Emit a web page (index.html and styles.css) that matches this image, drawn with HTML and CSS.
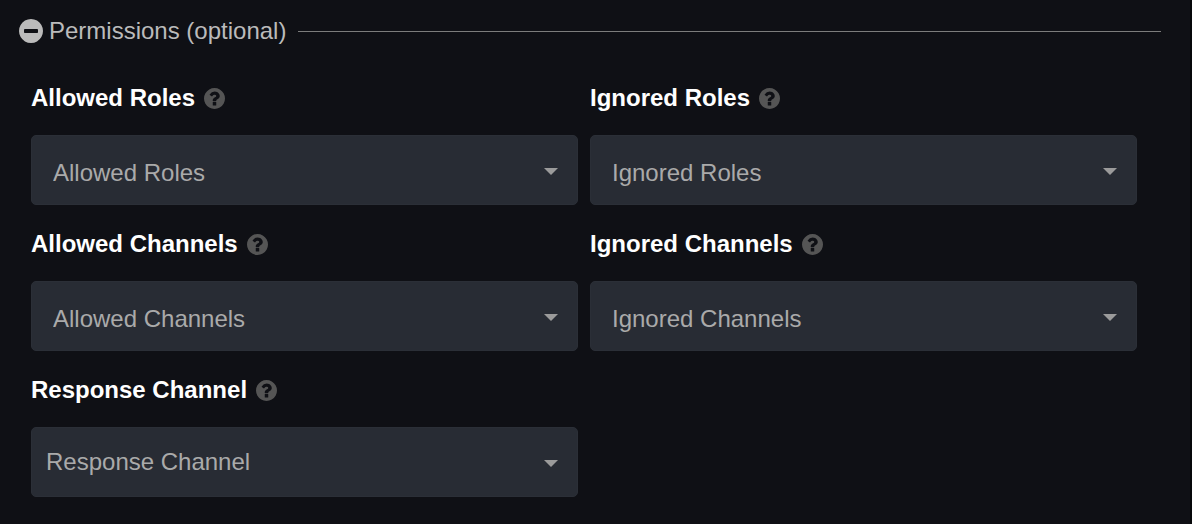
FILE: index.html
```html
<!DOCTYPE html>
<html lang="en">
<head>
  <meta charset="UTF-8">
  <meta name="viewport" content="width=device-width, initial-scale=1.0">
  <title>Permissions</title>
  <link rel="stylesheet" href="styles.css">
</head>
<body>
  <svg class="sprite" aria-hidden="true">
    <symbol id="icon-question" viewBox="0 0 1536 1536">
      <path d="M896 1248v-192q0-14-9-23t-23-9h-192q-14 0-23 9t-9 23v192q0 14 9 23t23 9h192q14 0 23-9t9-23zm256-672q0-88-55.500-163t-138.500-116-170-41q-243 0-371 213-15 24 8 42l132 100q7 6 19 6 16 0 25-12 53-68 86-92 34-24 86-24 48 0 85.500 26t37.500 59q0 38-20 61t-68 45q-63 28-115.500 86.500t-52.500 125.500v36q0 14 9 23t23 9h192q14 0 23-9t9-23q0-19 21.500-49.500t54.500-49.500q32-18 49-28.500t46-35 44.500-48 28-60.500 12.500-81zm384 192q0 209-103 385.500t-279.500 279.500-385.500 103-385.500-103-279.500-279.500-103-385.500 103-385.500 279.500-279.500 385.500-103 385.500 103 279.500 279.500 103 385.500z"/>
    </symbol>
    <symbol id="icon-caret" viewBox="0 0 14 7">
      <path d="M0 0h14L7 7z"/>
    </symbol>
  </svg>

  <section class="permissions">
    <button class="section-toggle" type="button" aria-expanded="true">
      <svg class="toggle-icon" viewBox="0 0 1536 1536" aria-hidden="true">
        <path d="M1216 832v-128q0-26-19-45t-45-19h-768q-26 0-45 19t-19 45v128q0 26 19 45t45 19h768q26 0 45-19t19-45zm320-64q0 209-103 385.500t-279.500 279.500-385.500 103-385.500-103-279.500-279.500-103-385.500 103-385.500 279.500-279.500 385.500-103 385.500 103 279.500 279.500 103 385.500z"/>
      </svg>
      <span>Permissions (optional)</span>
    </button>

    <form class="fields">
      <div class="field">
        <div class="field-title">
          <label for="allowed-roles">Allowed Roles</label>
          <svg class="help"><use href="#icon-question"/></svg>
        </div>
        <div class="select multi">
          <select id="allowed-roles"><option>Allowed Roles</option></select>
          <svg class="caret"><use href="#icon-caret"/></svg>
        </div>
      </div>

      <div class="field">
        <div class="field-title">
          <label for="ignored-roles">Ignored Roles</label>
          <svg class="help"><use href="#icon-question"/></svg>
        </div>
        <div class="select multi">
          <select id="ignored-roles"><option>Ignored Roles</option></select>
          <svg class="caret"><use href="#icon-caret"/></svg>
        </div>
      </div>

      <div class="field">
        <div class="field-title">
          <label for="allowed-channels">Allowed Channels</label>
          <svg class="help"><use href="#icon-question"/></svg>
        </div>
        <div class="select multi">
          <select id="allowed-channels"><option>Allowed Channels</option></select>
          <svg class="caret"><use href="#icon-caret"/></svg>
        </div>
      </div>

      <div class="field">
        <div class="field-title">
          <label for="ignored-channels">Ignored Channels</label>
          <svg class="help"><use href="#icon-question"/></svg>
        </div>
        <div class="select multi">
          <select id="ignored-channels"><option>Ignored Channels</option></select>
          <svg class="caret"><use href="#icon-caret"/></svg>
        </div>
      </div>

      <div class="field">
        <div class="field-title">
          <label for="response-channel">Response Channel</label>
          <svg class="help"><use href="#icon-question"/></svg>
        </div>
        <div class="select single">
          <select id="response-channel"><option>Response Channel</option></select>
          <svg class="caret"><use href="#icon-caret"/></svg>
        </div>
      </div>
    </form>
  </section>
</body>
</html>
```

FILE: styles.css
```css
* {
  box-sizing: border-box;
}

html {
  background-color: #0f1015;
}

body {
  border-right: 2px solid #07080a;
  color: #fff;
  font-family: "Liberation Sans", Arial, sans-serif;
  font-size: 24px;
  line-height: 28px;
  margin: 0;
}

.sprite {
  display: none;
}

.permissions {
  padding: 17px 29px 27px 19px;
}

.section-toggle {
  display: flex;
  align-items: center;
  gap: 6px;
  width: 100%;
  padding: 0;
  border: 0;
  background: none;
  color: #bbb;
  font: inherit;
  cursor: pointer;
}

/* line that fills the rest of the heading */
.section-toggle::after {
  content: "";
  flex: 1;
  height: 1px;
  margin-left: 6px;
  background-color: #7c7c7c;
}

.toggle-icon {
  width: 24px;
  height: 24px;
  fill: currentColor;
}

.fields {
  display: grid;
  grid-template-columns: 1fr 1fr;
  column-gap: 12px;
  row-gap: 25px;
  padding: 39px 24px 0 12px;
}

.field-title {
  display: flex;
  align-items: center;
  gap: 9px;
  margin-bottom: 23px;
}

.field-title label {
  font-weight: bold;
}

.help {
  width: 21px;
  height: 21px;
  fill: #555;
}

.select {
  position: relative;
}

.select select {
  display: block;
  width: 100%;
  height: 70px;
  border: 1px solid #2b2f37;
  border-radius: 5px;
  background-color: #282c34;
  color: #aaa;
  font: inherit;
  appearance: none;
}

.multi select {
  padding: 5px 48px 0 21px;
}

.single select {
  padding: 0 48px 0 14px;
}

.caret {
  position: absolute;
  top: 33px;
  right: 20px;
  width: 14px;
  height: 7px;
  fill: #9b9b9b;
  pointer-events: none;
}
```
